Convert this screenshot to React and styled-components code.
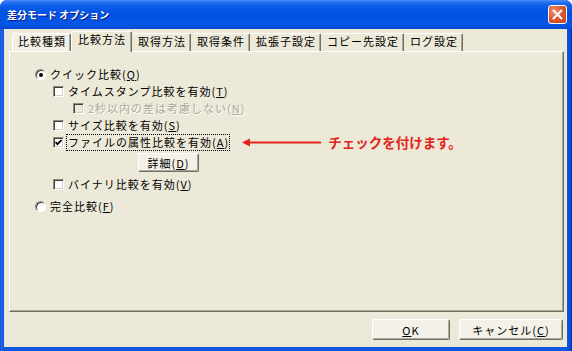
import React from 'react';
import styled, { createGlobalStyle } from 'styled-components';

const GlobalStyle = createGlobalStyle`
  html, body { margin: 0; padding: 0; background: #fff; }
  body { font-family: "Noto Sans CJK JP", "Noto Sans", sans-serif; }
`;

const Window = styled.div`
  width: 572px;
  height: 351px;
  display: flex;
  flex-direction: column;
  box-sizing: border-box;
  border-radius: 7px 7px 0 0;
  overflow: hidden;
  background: linear-gradient(to right, #0831d9 0, #2a75f3 1px, #0a57e0 3px, #0a57e0 calc(100% - 4px), #0a46c8 calc(100% - 1px), #001ea0 100%);
`;

const TitleBar = styled.div`
  height: 29px;
  flex: none;
  display: flex;
  align-items: center;
  justify-content: space-between;
  padding: 0 5px 0 7px;
  background: linear-gradient(to bottom, #4b8df8 0, #2a72f2 2px, #0a5ce8 6px, #0352e3 50%, #0657e6 85%, #0a48cf 100%);
`;

const Title = styled.span`
  color: #fff;
  font-size: 10px;
  font-weight: 700;
  text-shadow: 1px 1px 0 #0a1883;
  line-height: 14px;
`;

const CloseButton = styled.div`
  width: 19px;
  height: 19px;
  box-sizing: border-box;
  border: 1px solid #fff;
  border-radius: 3px;
  background: radial-gradient(circle at 30% 30%, #ee9070 0, #de5a33 45%, #c4411b 100%);
  display: flex;
  align-items: center;
  justify-content: center;
`;

const Body = styled.div`
  flex: 1;
  margin: 0 5px 4px 4px;
  background: #ece9d8;
  display: flex;
  flex-direction: column;
  padding: 2px 3px 7px 5px;
`;

const TabStrip = styled.div`
  height: 20px;
  flex: none;
  display: flex;
  align-items: flex-end;
  padding-left: 3px;
`;

const Tab = styled.div`
  height: ${p => (p.$active ? 21 : 18)}px;
  margin-bottom: ${p => (p.$active ? -1 : 0)}px;
  position: relative;
  z-index: ${p => (p.$active ? 1 : 0)};
  box-sizing: border-box;
  padding: ${p => (p.$active ? '0 5px 0 6px' : '0 4px 0 5px')};
  border-top: 1px solid #fff;
  border-left: 1px solid ${p => (p.$first || p.$active ? '#fff' : 'transparent')};
  border-right: 1px solid #716f64;
  box-shadow: inset -1px 0 #aca899;
  border-radius: 2px 2px 0 0;
  background: ${p => (p.$first ? '#f2f0e6' : '#ece9d8')};
  font-size: 11px;
  letter-spacing: 1px;
  line-height: 15px;
  color: #000;
  white-space: nowrap;
`;

const Panel = styled.div`
  flex: 1;
  box-sizing: border-box;
  border: 1px solid;
  border-color: #fff #716f64 #716f64 #fff;
  box-shadow: inset -1px -1px #aca899;
  padding: 14px 0 0 25px;
  display: flex;
  flex-direction: column;
`;

const Row = styled.div`
  height: 17px;
  display: flex;
  align-items: center;
  gap: 4px;
  margin-left: ${p => p.$indent || 0}px;
  margin-top: ${p => p.$gap || 0}px;
`;

const Box = styled.span`
  width: 11px;
  height: 11px;
  flex: none;
  box-sizing: border-box;
  border: 1px solid;
  border-color: #8e8b7d #fff #fff #8e8b7d;
  box-shadow: inset 1px 1px #404040, inset -1px -1px #d4d0c8;
  background: ${p => (p.$disabled ? '#ece9d8' : '#fff')};
  display: flex;
  align-items: center;
  justify-content: center;
`;

const Radio = styled.span`
  width: 11px;
  height: 11px;
  flex: none;
  box-sizing: border-box;
  border-radius: 50%;
  border: 1px solid;
  border-color: #8e8b7d #fff #fff #8e8b7d;
  box-shadow: inset 1px 1px #404040;
  background: #fff;
  display: flex;
  align-items: center;
  justify-content: center;

  &::after {
    content: '';
    width: 4px;
    height: 4px;
    border-radius: 50%;
    background: ${p => (p.$checked ? '#000' : 'transparent')};
  }
`;

const Label = styled.span`
  font-size: 11px;
  letter-spacing: 1px;
  line-height: 15px;
  white-space: nowrap;
  color: ${p => (p.$disabled ? '#aca899' : '#000')};
  text-shadow: ${p => (p.$disabled ? '1px 1px 0 #fff' : 'none')};
  border: 1px dotted ${p => (p.$focus ? '#000' : 'transparent')};
  padding: 0 0 0 1px;
  margin-left: -2px;
`;

const Key = styled.span`
  text-decoration: underline;
`;

const Button = styled.div`
  width: ${p => p.$w}px;
  height: ${p => p.$h || 21}px;
  box-sizing: border-box;
  flex: none;
  border: 1px solid;
  border-color: #fff #716f64 #716f64 #fff;
  box-shadow: inset -1px -1px #aca899;
  border-radius: 2px;
  background: #f3f1e8;
  font-size: 11px;
  letter-spacing: 1px;
  color: #000;
  display: flex;
  align-items: center;
  justify-content: center;
  white-space: nowrap;
`;

const ButtonRow = styled.div`
  margin: 2px 0 0 103px;
`;

const Note = styled.span`
  color: #e3231b;
  font-size: 13.5px;
  font-weight: 700;
  line-height: 17px;
  white-space: nowrap;
  margin-left: 3px;
`;

const Arrow = styled.svg`
  flex: none;
  margin-left: 8px;
`;

const Footer = styled.div`
  flex: none;
  display: flex;
  justify-content: flex-end;
  gap: 9px;
  margin-top: 7px;
  padding-right: 1px;
`;

const tabs = ['比較種類', '比較方法', '取得方法', '取得条件', '拡張子設定', 'コピー先設定', 'ログ設定'];

const Check = () => (
  <svg width="7" height="7" viewBox="0 0 7 7">
    <path d="M0.5 3 L2.5 5.2 L6.5 1" fill="none" stroke="#000" strokeWidth="1.8" />
  </svg>
);

const Option = ({ type, checked, disabled, focus, indent, gap, children, after }) => (
  <Row $indent={indent} $gap={gap}>
    {type === 'radio' ? <Radio $checked={checked} /> : <Box $disabled={disabled}>{checked && <Check />}</Box>}
    <Label $disabled={disabled} $focus={focus}>{children}</Label>
    {after}
  </Row>
);

export default function App() {
  return (
    <>
      <GlobalStyle />
      <Window>
        <TitleBar>
          <Title>差分モード オプション</Title>
          <CloseButton>
            <svg width="11" height="11" viewBox="0 0 11 11">
              <path d="M1.5 1.5 L9.5 9.5 M9.5 1.5 L1.5 9.5" stroke="#fff" strokeWidth="2" strokeLinecap="round" />
            </svg>
          </CloseButton>
        </TitleBar>
        <Body>
          <TabStrip>
            {tabs.map((t, i) => (
              <Tab key={t} $active={i === 1} $first={i === 0}>{t}</Tab>
            ))}
          </TabStrip>
          <Panel>
            <Option type="radio" checked>クイック比較(<Key>Q</Key>)</Option>
            <Option indent={18}>タイムスタンプ比較を有効(<Key>T</Key>)</Option>
            <Option indent={38} disabled>2秒以内の差は考慮しない(<Key>N</Key>)</Option>
            <Option indent={18}>サイズ比較を有効(<Key>S</Key>)</Option>
            <Option
              indent={18}
              checked
              focus
              after={
                <>
                  <Arrow width="79" height="9" viewBox="0 0 79 9">
                    <path d="M6 4.5 H79" stroke="#e3231b" strokeWidth="2" />
                    <path d="M0 4.5 L8 0.5 L8 8.5 Z" fill="#e3231b" />
                  </Arrow>
                  <Note>チェックを付けます。</Note>
                </>
              }
            >
              ファイルの属性比較を有効(<Key>A</Key>)
            </Option>
            <ButtonRow>
              <Button $w={61} $h={19}>詳細(<Key>D</Key>)</Button>
            </ButtonRow>
            <Option indent={18} gap={4}>バイナリ比較を有効(<Key>V</Key>)</Option>
            <Option type="radio" gap={5}>完全比較(<Key>F</Key>)</Option>
          </Panel>
          <Footer>
            <Button $w={78}><Key>O</Key>K</Button>
            <Button $w={104}>キャンセル(<Key>C</Key>)</Button>
          </Footer>
        </Body>
      </Window>
    </>
  );
}
